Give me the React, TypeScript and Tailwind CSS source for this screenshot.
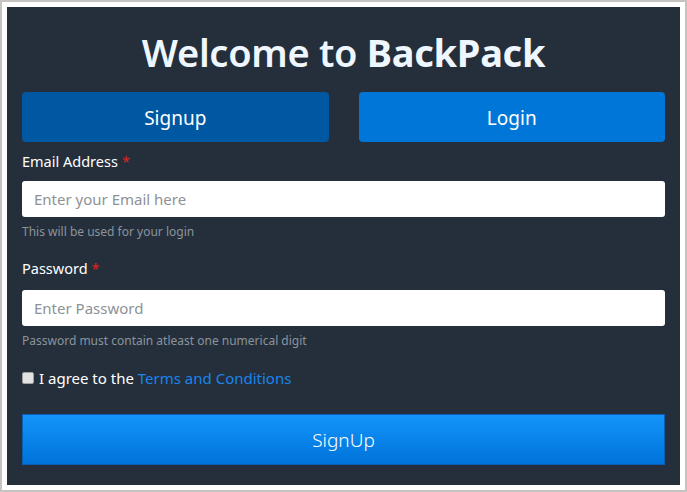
import React from "react";

export default function App() {
  return (
    <div className="w-[687px] h-[492px] bg-white border-2 border-[#c6c4c2] p-[5px] font-['Noto_Sans',sans-serif]">
      <div className="h-full w-full bg-[#242f3b] px-[15px] flex flex-col">
        <div className="h-[85px] pt-[4px] flex items-center justify-center">
          <h1 className="text-[38px] font-semibold text-[#eef6ff] leading-none tracking-[-0.3px]">
            Welcome to <b className="font-bold">BackPack</b>
          </h1>
        </div>
        <div className="flex gap-[30px]">
          <button className="flex-1 h-[50px] pt-[3px] rounded-[4px] bg-[#0058a2] text-white text-[19px]">Signup</button>
          <button className="flex-1 h-[50px] pt-[3px] rounded-[4px] bg-[#0077d8] text-white text-[19px]">Login</button>
        </div>
        <div className="h-[39px] flex items-center text-[14.5px] text-white">
          Email Address <span className="text-[#e52020] ml-[4px]">*</span>
        </div>
        <input
          className="h-[36px] rounded-[3px] bg-white px-[12px] text-[15px] text-[#333] placeholder:text-[#8d9296] outline-none"
          placeholder="Enter your Email here"
        />
        <div className="h-[30px] flex items-center text-[12px] text-[#8b949c]">This will be used for your login</div>
        <div className="h-[43px] flex items-center text-[14.5px] text-white">
          Password <span className="text-[#e52020] ml-[4px]">*</span>
        </div>
        <input
          className="h-[36px] rounded-[3px] bg-white px-[12px] text-[15px] text-[#333] placeholder:text-[#8d9296] outline-none"
          placeholder="Enter Password"
        />
        <div className="h-[30px] flex items-center text-[12px] text-[#8b949c]">Password must contain atleast one numerical digit</div>
        <div className="h-[44px] flex items-center text-[15px] text-white">
          <span className="w-[12px] h-[12px] bg-[#e2e2e2] border border-[#a0a0a0] rounded-[2px] mr-[5px]"></span>
          I agree to the&nbsp;<span className="text-[#1a84ec]">Terms and Conditions</span>
        </div>
        <button className="mt-[14px] h-[51px] pt-[2px] border border-[#0b5eb5] bg-gradient-to-b from-[#1494fa] to-[#0073d9] text-white text-[19px] font-light">
          SignUp
        </button>
      </div>
    </div>
  );
}
